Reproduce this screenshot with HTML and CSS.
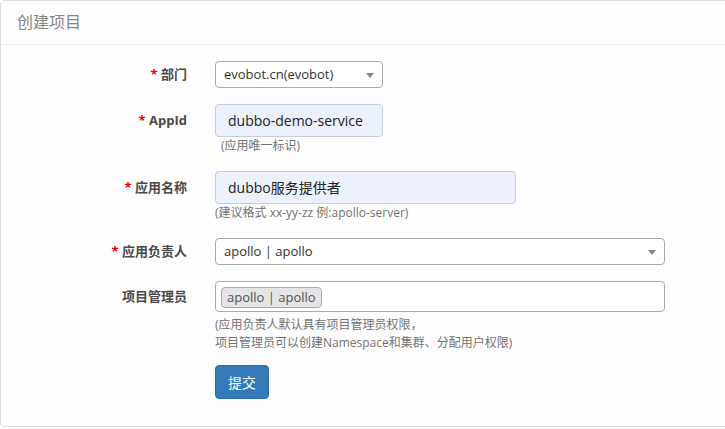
FILE: index.html
```html
<!DOCTYPE html>
<html lang="zh">
<head>
<meta charset="utf-8">
<link rel="stylesheet" href="styles.css">
</head>
<body>
<div class="panel">
  <div class="panel-heading">创建项目</div>
  <div class="panel-body">
    <div class="form-group">
      <label class="label"><span class="star">*</span> 部门</label>
      <div class="control">
        <div class="select select-sm">evobot.cn(evobot)<span class="arrow"></span></div>
      </div>
    </div>
    <div class="form-group">
      <label class="label tall"><span class="star">*</span> AppId</label>
      <div class="control">
        <div class="input input-sm">dubbo-demo-service</div>
        <div class="help help-indent">(应用唯一标识)</div>
      </div>
    </div>
    <div class="form-group">
      <label class="label tall"><span class="star">*</span> 应用名称</label>
      <div class="control">
        <div class="input input-md">dubbo服务提供者</div>
        <div class="help">(建议格式 xx-yy-zz 例:apollo-server)</div>
      </div>
    </div>
    <div class="form-group">
      <label class="label"><span class="star">*</span> 应用负责人</label>
      <div class="control">
        <div class="select select-lg">apollo | apollo<span class="arrow"></span></div>
      </div>
    </div>
    <div class="form-group">
      <label class="label multi-label">项目管理员</label>
      <div class="control">
        <div class="multi"><span class="tag">apollo | apollo</span></div>
        <div class="help help-2">(应用负责人默认具有项目管理员权限，<br>项目管理员可以创建Namespace和集群、分配用户权限)</div>
      </div>
    </div>
    <div class="form-group">
      <div class="label"></div>
      <div class="control">
        <button class="btn">提交</button>
      </div>
    </div>
  </div>
</div>
</body>
</html>
```
FILE: styles.css
```css
html, body {
  margin: 0;
  padding: 0;
  background: #fff;
}
body {
  font-family: "Open Sans", "Noto Sans CJK SC", sans-serif;
  color: #333;
  overflow: hidden;
}
.panel {
  width: 730px;
  height: 427px;
  border: 1px solid #dcdce4;
  border-radius: 4px;
  background: #fdfdfe;
  box-sizing: border-box;
}
.panel-heading {
  height: 44px;
  box-sizing: border-box;
  border-bottom: 1px solid #ececf0;
  padding: 0 0 0 16px;
  line-height: 43px;
  font-size: 16px;
  color: #858585;
  background: #fdfdfe;
}
.panel-body {
  padding-top: 16px;
}
.form-group {
  display: flex;
  align-items: flex-start;
  margin-bottom: 16px;
}
.label {
  width: 186px;
  flex: none;
  text-align: right;
  font-size: 13px;
  font-weight: bold;
  color: #4a4a4a;
  line-height: 27px;
  margin-right: 28px;
}
.label.tall {
  line-height: 33px;
}
.multi-label {
  line-height: 31px;
}
.star {
  color: #e00;
}
.control {
  flex: none;
}
.select {
  position: relative;
  height: 27px;
  box-sizing: border-box;
  border: 1px solid #aaa;
  border-radius: 4px;
  background: #fff;
  font-size: 13px;
  line-height: 25px;
  padding-left: 8px;
  color: #333;
}
.select-sm { width: 168px; }
.select-lg { width: 450px; }
.arrow {
  position: absolute;
  right: 8px;
  top: 11px;
  width: 0;
  height: 0;
  border-left: 4px solid transparent;
  border-right: 4px solid transparent;
  border-top: 5px solid #888;
}
.input {
  height: 33px;
  box-sizing: border-box;
  border: 1px solid #c5cde0;
  border-radius: 4px;
  background: #ecf1fd;
  font-size: 14px;
  line-height: 31px;
  padding-left: 12px;
  color: #222;
}
.input-sm { width: 168px; }
.input-md { width: 301px; }
.help {
  font-size: 12px;
  line-height: 18px;
  color: #737373;
  margin-top: 0;
}
.help-indent {
  padding-left: 6px;
}
.help-2 {
  margin-top: 4px;
}
.multi {
  display: flex;
  align-items: flex-start;
  width: 450px;
  height: 31px;
  box-sizing: border-box;
  border: 1px solid #aaa;
  border-radius: 4px;
  background: #fff;
  padding: 5px 0 0 5px;
}
.tag {
  display: block;
  height: 21px;
  box-sizing: border-box;
  border: 1px solid #aaa;
  border-radius: 4px;
  background: #e4e4e4;
  font-size: 13px;
  line-height: 19px;
  padding: 0 5px;
  color: #555;
}
.btn {
  width: 54px;
  height: 34px;
  margin-top: -3px;
  border: 1px solid #2e6da4;
  border-radius: 4px;
  background: #337ab7;
  color: #fff;
  font-family: "Open Sans", "Noto Sans CJK SC", sans-serif;
  font-size: 14px;
  padding: 0;
}
```
